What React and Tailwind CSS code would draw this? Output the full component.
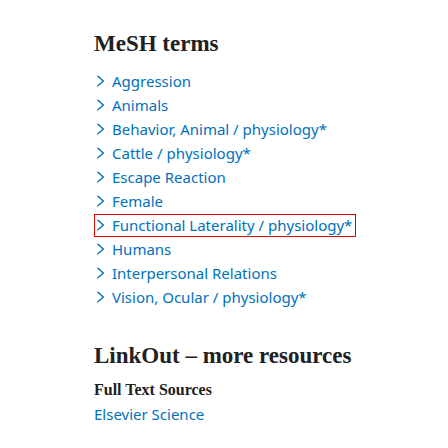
export default function App() {
  const terms = [
    "Aggression",
    "Animals",
    "Behavior, Animal / physiology*",
    "Cattle / physiology*",
    "Escape Reaction",
    "Female",
    "Functional Laterality / physiology*",
    "Humans",
    "Interpersonal Relations",
    "Vision, Ocular / physiology*",
  ];
  const serif = { fontFamily: '"Liberation Serif", serif' };
  return (
    <div className="w-[448px] h-[448px] bg-white pl-[94px] pt-[30px] overflow-hidden">
      <h2 className="text-[23px] font-bold text-[#212121] leading-[28px]" style={serif}>MeSH terms</h2>
      <ul className="mt-[11px] flex flex-col" style={{ fontFamily: '"Noto Sans", sans-serif' }}>
        {terms.map((t, i) => (
          <li key={t} className="h-[24px] flex items-center">
            <div className={"flex items-center h-[23px] pr-[3px] border " + (i === 6 ? "border-[#e00000]" : "border-transparent")}>
              <svg width="12" height="12" viewBox="0 0 12 12" className="mr-[5px]">
                <path d="M2.5 0.8 L8.3 6 L2.5 11.2" fill="none" stroke="#0071bc" strokeWidth="1.4" />
              </svg>
              <span className="text-[15px] text-[#0071bc] leading-[21px]">{t}</span>
            </div>
          </li>
        ))}
      </ul>
      <h2 className="mt-[33px] text-[23px] font-bold text-[#212121] leading-[28px]" style={serif}>LinkOut – more resources</h2>
      <h3 className="mt-[9px] text-[16px] font-bold text-[#212121] leading-[22px]" style={serif}>Full Text Sources</h3>
      <a className="block mt-[2px] text-[15px] text-[#0071bc] leading-[22px]" style={{ fontFamily: '"Noto Sans", sans-serif' }}>Elsevier Science</a>
    </div>
  );
}
